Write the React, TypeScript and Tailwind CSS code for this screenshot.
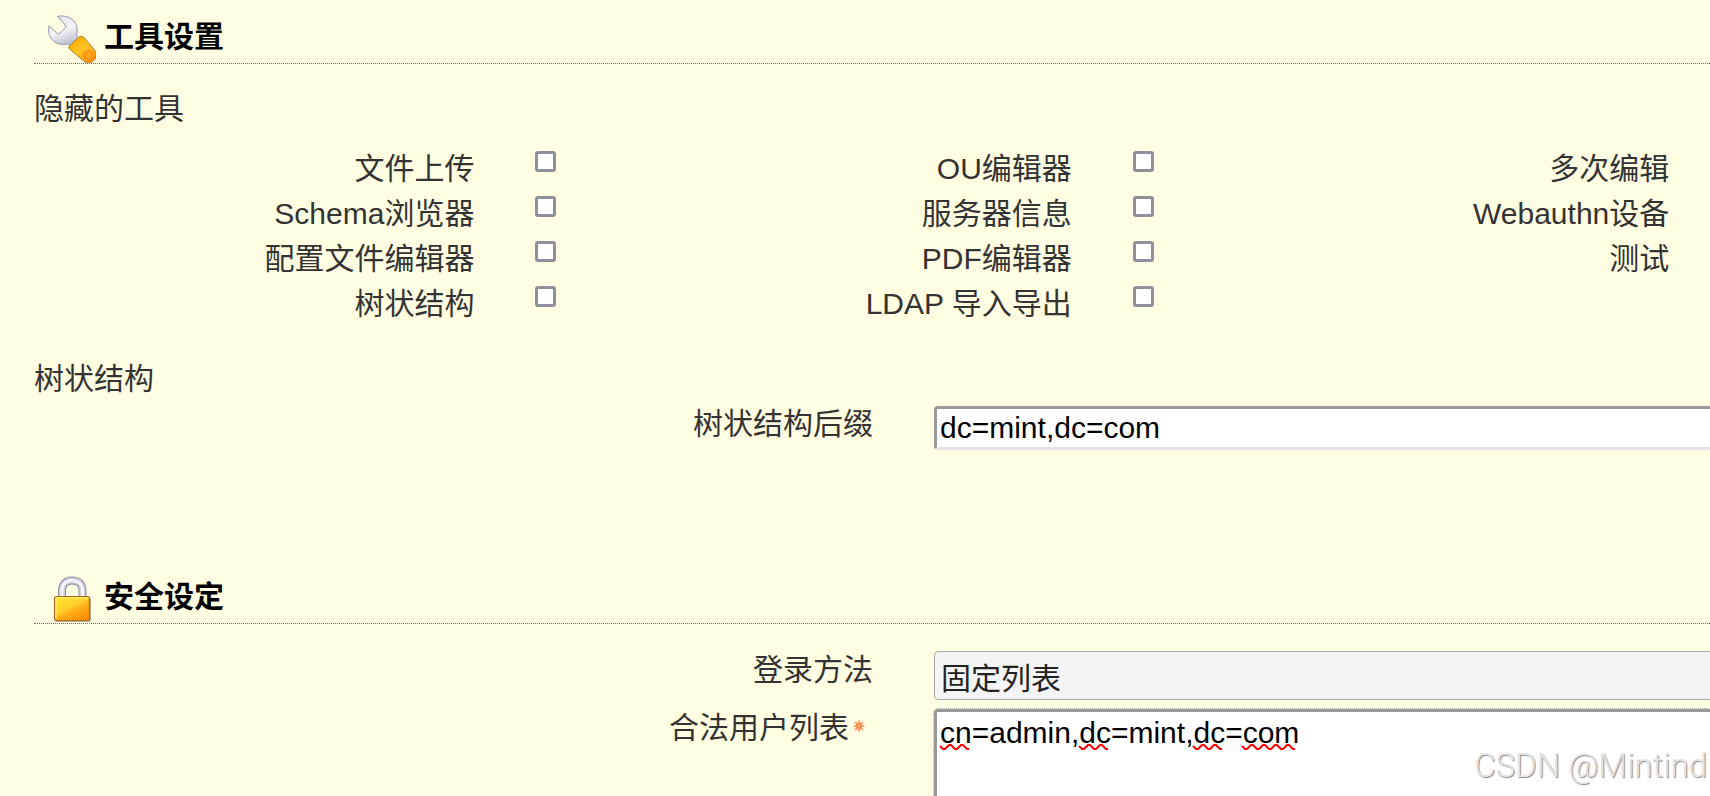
import React from "react";

type Tool = { id: string; label: string };

const tools: Tool[] = [
  { id: "upload", label: "文件上传" },
  { id: "ou", label: "OU编辑器" },
  { id: "multi", label: "多次编辑" },
  { id: "schema", label: "Schema浏览器" },
  { id: "server", label: "服务器信息" },
  { id: "webauthn", label: "Webauthn设备" },
  { id: "profile", label: "配置文件编辑器" },
  { id: "pdf", label: "PDF编辑器" },
  { id: "tests", label: "测试" },
  { id: "tree", label: "树状结构" },
  { id: "ldap", label: "LDAP 导入导出" },
];

function WrenchIcon() {
  return (
    <svg viewBox="0 0 48 48" className="size-12 shrink-0" aria-hidden="true">
      <defs>
        <linearGradient id="steel" x1="0.2" y1="0" x2="0.6" y2="1">
          <stop offset="0" stopColor="#e2e3ea" />
          <stop offset="0.5" stopColor="#f3f3f8" />
          <stop offset="1" stopColor="#b4b6c6" />
        </linearGradient>
        <linearGradient id="grip" x1="0.2" y1="0.1" x2="0.8" y2="0.9">
          <stop offset="0" stopColor="#ffae00" />
          <stop offset="0.5" stopColor="#ffc524" />
          <stop offset="1" stopColor="#fb9608" />
        </linearGradient>
      </defs>
      <path
        d="M9.500 1.500C14 0 21.500 1.500 25.500 5.500 29 9.500 30 14.500 28.500 20l3.500 4-8.500 8L20 28.800C14 30.500 7.500 28.500 4 24.500.8 20.500-.2 15.500 1 10.800L10 19.200 13.800 16.500 18 12.200 16.500 9Z"
        fill="url(#steel)"
        stroke="#9294ab"
        strokeWidth="1"
        strokeLinejoin="round"
      />
      <path
        d="M35 21.500 46.500 35c2.300 3.500 1.800 8-.8 10.700-2.700 2.500-7.200 2.800-9.900.3L20.500 33c.5-1.500 2-3 3.500-4.500l6.500-6c1.500-1.200 3-1.500 4.500-1Z"
        fill="url(#grip)"
        stroke="#b8782c"
        strokeWidth="1"
        strokeLinejoin="round"
      />
      <circle cx="40" cy="40" r="4" fill="#ffa51a" stroke="#f08a0c" strokeWidth="1.300" />
    </svg>
  );
}

function LockIcon() {
  return (
    <svg viewBox="0 0 48 48" className="size-12 shrink-0" aria-hidden="true">
      <defs>
        <linearGradient id="body" x1="0.1" y1="0" x2="0.8" y2="1">
          <stop offset="0" stopColor="#ffe62e" />
          <stop offset="0.45" stopColor="#ffd02a" />
          <stop offset="0.6" stopColor="#ffb01a" />
          <stop offset="1" stopColor="#ff8d05" />
        </linearGradient>
      </defs>
      <path d="M14 24V15.500C14 9 18 5.500 24 5.500S34.500 9 34.500 15.500V24" fill="none" stroke="#8d8da6" strokeWidth="8" />
      <path d="M14 24V15.500C14 9 18 5.500 24 5.500S34.500 9 34.500 15.500V24" fill="none" stroke="#cbcbd9" strokeWidth="6" />
      <path d="M14 23V15.500C14 9 18 5.500 24 5.500S34.500 9 34.500 15.500V23" fill="none" stroke="#f4f4fa" strokeWidth="3" />
      <rect x="6.500" y="22.500" width="36.500" height="24.500" rx="2.500" fill="#7b6a4a" opacity=".5" />
      <rect x="6.500" y="21.500" width="35" height="24" rx="2" fill="url(#body)" stroke="#b06a20" strokeWidth="1.200" />
      <path d="M8 43.500V23H40" fill="none" stroke="#fff27a" strokeWidth="1" />
    </svg>
  );
}

function RequiredMark() {
  return (
    <svg viewBox="0 0 12 12" className="size-3" role="img" aria-label="*">
      <path d="M6 .5v11M.5 6h11M2 2l8 8M10 2l-8 8" stroke="#f9a878" strokeWidth="2.200" />
      <circle cx="6" cy="6" r="3" fill="#f58a45" />
      <circle cx="6" cy="6" r="1" fill="#fcc79a" />
    </svg>
  );
}

function wave(from: number, to: number) {
  let d = `M${from} 2`;
  for (let x = from; x < to; x += 12) {
    d += `L${x + 3} 5H${x + 5}`;
    if (x + 9 <= to) d += `L${x + 9} 1H${Math.min(x + 11, to)}`;
  }
  return d;
}

function Heading({ icon, children }: { icon: React.ReactNode; children: React.ReactNode }) {
  return (
    <h2 className="flex h-[50px] items-end gap-2 border-b border-dotted border-[#666] pl-[14px] font-bold text-black">
      {icon}
      <span className="self-start">{children}</span>
    </h2>
  );
}

export default function App() {
  return (
    <div
      lang="zh-CN"
      className="relative h-screen overflow-hidden bg-[#fffee2] font-['Liberation_Sans','Noto_Sans_CJK_SC',sans-serif] text-[30px] leading-[45px] text-[#333]"
    >
      <main className="w-[106.8%] pt-[14px] pl-[34px]">
        <section>
          <Heading icon={<WrenchIcon />}>工具设置</Heading>
          <h3 className="mt-[22px]">隐藏的工具</h3>
          <div className="mt-[15px] grid grid-cols-3">
            {tools.map((t) => (
              <div key={t.id} className="flex h-[45px]">
                <label htmlFor={t.id} className="flex-1 text-right">
                  {t.label}
                </label>
                <div className="w-[157px] pt-[5px] pl-[61px]">
                  <input
                    id={t.id}
                    type="checkbox"
                    className="block size-[21px] appearance-none rounded-[3px] border-3 border-[#8f8f9d] bg-white checked:bg-[#8f8f9d]"
                  />
                </div>
              </div>
            ))}
          </div>
          <h3 className="mt-[30px]">树状结构</h3>
          <div className="flex">
            <label htmlFor="suffix" className="w-[839px] shrink-0 text-right">
              树状结构后缀
            </label>
            <div className="flex-1 pt-[5px] pl-[61px]">
              <input
                id="suffix"
                type="text"
                defaultValue="dc=mint,dc=com"
                className="block h-[44px] w-full rounded-[4px] border-3 border-[#999] border-b-[#e3e3e3] bg-white px-[3px] leading-9 text-black"
              />
            </div>
          </div>
        </section>

        <section className="mt-[124px]">
          <Heading icon={<LockIcon />}>安全设定</Heading>
          <div className="mt-[23px] flex">
            <label htmlFor="method" className="w-[839px] shrink-0 text-right">
              登录方法
            </label>
            <div className="flex-1 pt-1 pl-[61px]">
              <select
                id="method"
                className="block h-[49px] w-full appearance-none rounded-[4px] border border-[#aaa] bg-[#f4f4f4] px-[6px] pt-[4px] text-[#222]"
              >
                <option>固定列表</option>
              </select>
            </div>
          </div>
          <div className="mt-[5px] flex">
            <label htmlFor="users" className="flex h-[45px] w-[839px] shrink-0 justify-end gap-1 pr-2">
              合法用户列表
              <span className="pt-[15px]">
                <RequiredMark />
              </span>
            </label>
            <div className="relative flex-1 pt-1 pl-[61px]">
              <textarea
                id="users"
                rows={5}
                spellCheck={false}
                defaultValue="cn=admin,dc=mint,dc=com"
                className="block w-full resize-none rounded-[4px] border-3 border-[#999] bg-white px-[3px] leading-[42px] text-black outline-1 outline-dotted outline-[#aaa]"
              />
              <svg className="pointer-events-none absolute top-[39px] left-[67px] h-[6px] w-[370px]" viewBox="0 0 370 6" aria-hidden="true">
                <path
                  d={wave(0, 31) + wave(139, 170) + wave(253, 284) + wave(302, 358)}
                  fill="none"
                  stroke="#f00"
                  strokeWidth="2"
                />
              </svg>
            </div>
          </div>
        </section>
      </main>
      <p className="pointer-events-none absolute right-[3px] bottom-[7px] font-[Roboto,sans-serif] text-[33px] leading-[46px] font-light text-[#e4e4e4] [text-shadow:1px_1px_1px_#888]">
        CSDN @Mintind
      </p>
    </div>
  );
}
